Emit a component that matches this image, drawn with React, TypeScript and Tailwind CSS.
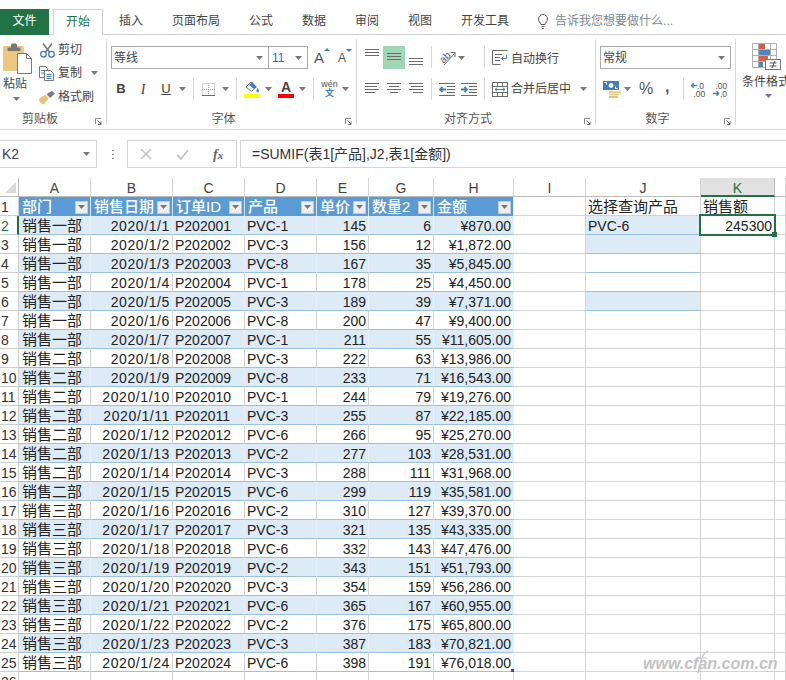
import type { ReactNode } from 'react'

const FONT = "font-['Liberation_Sans','Noto_Sans_CJK_SC',sans-serif]"

const COLS = ['A', 'B', 'C', 'D', 'E', 'G', 'H', 'I', 'J', 'K', '']
const HEADERS = ['部门', '销售日期', '订单ID', '产品', '单价', '数量2', '金额']

// dept, date, product, price, qty, amount
const ROWS: [string, string, string, number, number, string][] = [
  ['一', '2020/1/1', 'PVC-1', 145, 6, '¥870.00'],
  ['一', '2020/1/2', 'PVC-3', 156, 12, '¥1,872.00'],
  ['一', '2020/1/3', 'PVC-8', 167, 35, '¥5,845.00'],
  ['一', '2020/1/4', 'PVC-1', 178, 25, '¥4,450.00'],
  ['一', '2020/1/5', 'PVC-3', 189, 39, '¥7,371.00'],
  ['一', '2020/1/6', 'PVC-8', 200, 47, '¥9,400.00'],
  ['一', '2020/1/7', 'PVC-1', 211, 55, '¥11,605.00'],
  ['二', '2020/1/8', 'PVC-3', 222, 63, '¥13,986.00'],
  ['二', '2020/1/9', 'PVC-8', 233, 71, '¥16,543.00'],
  ['二', '2020/1/10', 'PVC-1', 244, 79, '¥19,276.00'],
  ['二', '2020/1/11', 'PVC-3', 255, 87, '¥22,185.00'],
  ['二', '2020/1/12', 'PVC-6', 266, 95, '¥25,270.00'],
  ['二', '2020/1/13', 'PVC-2', 277, 103, '¥28,531.00'],
  ['二', '2020/1/14', 'PVC-3', 288, 111, '¥31,968.00'],
  ['二', '2020/1/15', 'PVC-6', 299, 119, '¥35,581.00'],
  ['三', '2020/1/16', 'PVC-2', 310, 127, '¥39,370.00'],
  ['三', '2020/1/17', 'PVC-3', 321, 135, '¥43,335.00'],
  ['三', '2020/1/18', 'PVC-6', 332, 143, '¥47,476.00'],
  ['三', '2020/1/19', 'PVC-2', 343, 151, '¥51,793.00'],
  ['三', '2020/1/20', 'PVC-3', 354, 159, '¥56,286.00'],
  ['三', '2020/1/21', 'PVC-6', 365, 167, '¥60,955.00'],
  ['三', '2020/1/22', 'PVC-2', 376, 175, '¥65,800.00'],
  ['三', '2020/1/23', 'PVC-3', 387, 183, '¥70,821.00'],
  ['三', '2020/1/24', 'PVC-6', 398, 191, '¥76,018.00'],
]

function Caret({ className = '' }: { className?: string }) {
  return (
    <svg width="7" height="4" viewBox="0 0 7 4" className={`shrink-0 ${className}`}>
      <path d="M0 0h7L3.5 4z" fill="#777" />
    </svg>
  )
}

function Sep({ className = '' }: { className?: string }) {
  return <div className={`w-px h-[22px] bg-[#d8d8d8] shrink-0 ${className}`} />
}

function Lines({ kind }: { kind: 'left' | 'center' | 'right' | 'top' | 'middle' | 'bottom' }) {
  const d = {
    left: 'M0 2.5h14M0 5.500h12M0 8.500h14M0 11.500h10',
    center: 'M0 2.500h14M2 5.500h10M0 8.500h14M3 11.500h8',
    right: 'M0 2.500h14M2 5.500h12M0 8.500h14M4 11.500h10',
    top: 'M0 0.500h14M0 3.500h14M0 6.500h14',
    middle: 'M0 4.500h14M0 7.500h14M0 10.500h14',
    bottom: 'M0 9.500h14M0 12.500h14M0 15.500h14',
  }[kind]
  return (
    <svg width="14" height="16" viewBox="0 0 14 16" className="shrink-0">
      <path d={d} stroke="#6b6b6b" fill="none" />
    </svg>
  )
}

function PasteIcon() {
  return (
    <svg width="29" height="31" viewBox="0 0 29 31">
      <rect x="0" y="3" width="21" height="25" rx="1.500" fill="#edc77f" />
      <path d="M4.500 8V4.500h3.500V2a1.500 1.500 0 0 1 1.500-1.500h3A1.500 1.500 0 0 1 14 2v2.500h3.500V8z" fill="#777" />
      <path d="M14.500 10.500h9l5 5v15h-14z" fill="#fff" stroke="#7a7a7a" />
      <path d="M23.500 10.500v5h5" fill="none" stroke="#7a7a7a" />
    </svg>
  )
}

function ScissorsIcon() {
  return (
    <svg width="15" height="15" viewBox="0 0 15 15">
      <path d="M3 0.500l6.800 9M12 0.500l-6.800 9" stroke="#777" strokeWidth="1.500" fill="none" />
      <circle cx="3.500" cy="11.200" r="2.800" fill="none" stroke="#3f7fc1" strokeWidth="1.300" />
      <circle cx="11.500" cy="11.200" r="2.800" fill="none" stroke="#3f7fc1" strokeWidth="1.300" />
    </svg>
  )
}

function CopyIcon() {
  return (
    <svg width="15" height="15" viewBox="0 0 15 15">
      <path d="M0.500 0.500h6l2 2v9h-8z" fill="#fff" stroke="#777" />
      <path d="M2 4.500h4M2 7h3" stroke="#3f7fc1" />
      <path d="M5.500 4.500h6l3 3v7h-9z" fill="#fff" stroke="#777" />
      <path d="M7.500 8.500h5M7.500 10.500h5M7.500 12.500h5" stroke="#3f7fc1" />
    </svg>
  )
}

function BrushIcon() {
  return (
    <svg width="16" height="13" viewBox="0 0 16 13">
      <path d="M0 8l6-4.500 3.500 4L5 13H2l1-2-2 1z" fill="#e8c27d" />
      <path d="M7.500 3l5.500-3 3 2.500-5 4.500z" fill="#7a7a7a" />
    </svg>
  )
}

function BordersIcon() {
  return (
    <svg width="13" height="13" viewBox="0 0 13 13">
      <path d="M0.500 0.500h12v12h-12zM6.500 0v13M0 6.500h13" fill="none" stroke="#a8a8a8" strokeDasharray="1 1" />
      <path d="M0 12.500h13" stroke="#666" />
    </svg>
  )
}

function FillIcon() {
  return (
    <svg width="16" height="18" viewBox="0 0 16 18">
      <path d="M2 7l5-5 5 5-4.500 4.500z" fill="#fff" stroke="#777" />
      <path d="M5 5l3-3 5 5-3 2z" fill="#3f7fc1" />
      <path d="M13.500 8c1 1.500 1.500 2.300 1.500 3a1.300 1.300 0 0 1-2.600 0c0-.7.5-1.500 1.100-3z" fill="#3f7fc1" />
      <rect x="0" y="14" width="16" height="4" fill="#ffff00" />
    </svg>
  )
}

function WrapIcon() {
  return (
    <svg width="16" height="15" viewBox="0 0 16 15">
      <path d="M0.500 0.500h15M0.500 14.500h8M0.500 0.500v14" stroke="#6b6b6b" fill="none" />
      <path d="M3 4.500h7M3 7.500h5M3 10.500h5" stroke="#6b6b6b" />
      <path d="M14.500 5v3.500h-5M11.500 6.500l-2 2 2 2" stroke="#3f7fc1" fill="none" />
    </svg>
  )
}

function MergeIcon() {
  return (
    <svg width="16" height="15" viewBox="0 0 16 15">
      <rect x="0.500" y="0.500" width="15" height="14" fill="none" stroke="#6b6b6b" />
      <path d="M0 4.500h16M0 10.500h16M5.500 0v4M10.500 0v4M5.500 11v4M10.500 11v4" stroke="#6b6b6b" />
      <path d="M3 7.500h10M5 5.800L3 7.500l2 1.700M11 5.800l2 1.700-2 1.700" stroke="#3f7fc1" fill="none" />
    </svg>
  )
}

function IndentIcon({ dir }: { dir: 'in' | 'out' }) {
  return (
    <svg width="16" height="13" viewBox="0 0 16 13">
      <path d="M0 0.500h16M8 3.500h8M8 6.500h8M8 9.500h8M0 12.500h16" stroke="#6b6b6b" />
      {dir === 'out' ? (
        <path d="M1 6.500h6M3.500 3.800L1 6.500l2.500 2.700" stroke="#3f7fc1" strokeWidth="1.800" fill="none" />
      ) : (
        <path d="M0 6.500h6M3.500 3.800L6 6.500 3.500 9.200" stroke="#3f7fc1" strokeWidth="1.800" fill="none" />
      )}
    </svg>
  )
}

function OrientIcon() {
  return (
    <svg width="17" height="17" viewBox="0 0 17 17">
      <text x="1" y="12" fontSize="10" fill="#555" transform="rotate(-45 6 9)" fontFamily="Liberation Sans">ab</text>
      <path d="M5 16L15.500 4.500M11.500 3.500h4.500V8" stroke="#666" fill="none" />
    </svg>
  )
}

function AccountingIcon() {
  return (
    <svg width="18" height="17" viewBox="0 0 18 17">
      <rect x="0" y="0" width="16" height="9" fill="#3f7fc1" />
      <circle cx="8" cy="4.500" r="2.400" fill="#fff" />
      <path d="M1.500 1.500h2v2M14.500 7.500h-2v-2" stroke="#fff" fill="none" />
      <path d="M6 10.500h12V12H6zM6 12.800h10v1.500H6zM6 15h9v2H6z" fill="#e8c27d" />
    </svg>
  )
}

function DecimalIcon({ more }: { more?: boolean }) {
  return (
    <svg width="15" height="15" viewBox="0 0 15 15" className="shrink-0">
      <text x={more ? 2.500 : 6} y="6.500" fontSize="8.500" fill="#555" fontFamily="Liberation Sans">{more ? '.00' : '.0'}</text>
      <text x={more ? 7 : 2.500} y="14.500" fontSize="8.500" fill="#555" fontFamily="Liberation Sans">{more ? '.0' : '.00'}</text>
      {more ? (
        <path d="M0 11.500h5.500M3.500 9.300l2.200 2.200-2.200 2.200" stroke="#3f7fc1" strokeWidth="1.300" fill="none" />
      ) : (
        <path d="M0.500 3.500h5.500M2.700 1.300L.5 3.500l2.200 2.200" stroke="#3f7fc1" strokeWidth="1.300" fill="none" />
      )}
    </svg>
  )
}

function CondFormatIcon() {
  return (
    <svg width="29" height="27" viewBox="0 0 29 27">
      <path d="M0.500 0.500h24v24h-24zM6.500 0v25M18.500 0v25M0 6.500h25M0 12.500h25M0 18.500h25" fill="none" stroke="#b0b0b0" />
      <rect x="7" y="1" width="6" height="5" fill="#d9603b" />
      <rect x="7" y="7" width="11" height="5" fill="#4a86c5" />
      <rect x="7" y="13" width="9" height="5" fill="#d9603b" />
      <rect x="7" y="19" width="4" height="5" fill="#4a86c5" />
      <rect x="13.500" y="16.500" width="15" height="10" fill="#fff" stroke="#777" />
      <path d="M17.500 20h7M17.500 23h7M23 18l-3 7" stroke="#555" fill="none" />
    </svg>
  )
}

function Launcher() {
  return (
    <svg width="7" height="7" viewBox="0 0 7 7" className="absolute right-[4px] bottom-[0px]">
      <path d="M0.500 6V0.500H6" stroke="#8a8a8a" fill="none" />
      <path d="M2.500 2.500L6 6M6 3.500V6.500H3" stroke="#666" fill="none" />
    </svg>
  )
}

function Group({ width, label, labelPad = 'pr-[16px]', children }: { width: string; label: string; labelPad?: string; children: ReactNode }) {
  return (
    <div className={`relative flex flex-col shrink-0 h-[86px] border-r border-[#d8d8d8] pt-[7px] ${width}`}>
      <div className="flex-1 min-h-0">{children}</div>
      <div className={`h-[14px] leading-[16px] text-center text-[12px] text-[#555] ${labelPad}`}>{label}</div>
      <Launcher />
    </div>
  )
}

function Combo({ width, label, color = 'text-[#444]', pad = 'pl-[2px]', caret = 'pr-[5px]' }: { width: string; label: string; color?: string; pad?: string; caret?: string }) {
  return (
    <div className={`flex items-center justify-between h-[23px] border border-[#ababab] text-[12px] ${width} ${pad} ${caret} ${color}`}>
      <span>{label}</span>
      <Caret />
    </div>
  )
}

function Ribbon() {
  return (
    <div className="h-[95px] border-b border-[#d4d4d4] pt-[4px] flex text-[12px] text-[#444] overflow-hidden">
      <Group width="w-[107px]" label="剪贴板" labelPad="pr-[26px]">
        <div className="flex h-[65px]">
          <div className="ml-[3px] w-[29px] -mt-[3px] flex flex-col items-center">
            <PasteIcon />
            <div className="self-start mt-[3px] leading-[14px]">粘贴</div>
            <Caret className="mt-[6px] -ml-[2px]" />
          </div>
          <div className="ml-[7px] flex flex-col -mt-[3px]">
            <div className="flex items-center h-[14px] gap-[3px] ml-[1px]"><ScissorsIcon />剪切</div>
            <div className="flex items-center h-[14px] gap-[4px] mt-[9px]"><CopyIcon />复制<Caret className="ml-[5px]" /></div>
            <div className="flex items-center h-[14px] gap-[3px] mt-[10px]"><BrushIcon />格式刷</div>
          </div>
        </div>
      </Group>

      <Group width="w-[250px]" label="字体">
        <div className="flex items-center ml-[4px]">
          <Combo width="w-[158px]" label="等线" />
          <Combo width="w-[40px] -ml-px" label="11" color="text-[#2b6cb0]" pad="pl-[3px]" />
          <div className="relative ml-[6px] w-[14px] text-[15px] text-[#555] leading-none">A<span className="absolute -right-[2px] -top-[2px] w-0 h-0 border-x-[3px] border-x-transparent border-b-[3px] border-b-[#3f7fc1]" /></div>
          <div className="relative ml-[10px] w-[12px] text-[12px] text-[#555] leading-none">A<span className="absolute -right-[2px] -top-[3px] w-0 h-0 border-x-[3px] border-x-transparent border-t-[3px] border-t-[#3f7fc1]" /></div>
        </div>
        <div className="flex items-center h-[24px] mt-[8px]">
          <b className="ml-[7px] w-[14px] text-center text-[13px] font-bold text-[#444]">B</b>
          <i className="ml-[8px] w-[14px] text-center text-[14px] font-['Liberation_Serif',serif] text-[#444]">I</i>
          <u className="ml-[9px] w-[14px] text-center text-[13px] text-[#444]">U</u>
          <Caret className="ml-[6px]" />
          <Sep className="ml-[7px]" />
          <div className="ml-[8px]"><BordersIcon /></div>
          <Caret className="ml-[7px]" />
          <Sep className="ml-[7px]" />
          <div className="ml-[7px]"><FillIcon /></div>
          <Caret className="ml-[5px]" />
          <div className="ml-[6px] w-[16px] flex flex-col items-center leading-none">
            <span className="text-[14px] text-[#444] h-[14px] font-bold">A</span>
            <span className="w-[16px] h-[4px] bg-[#ff0000]" />
          </div>
          <Caret className="ml-[5px]" />
          <Sep className="ml-[7px]" />
          <div className="ml-[8px] w-[15px] flex flex-col items-center leading-none">
            <span className="text-[9px] text-[#555]">wén</span>
            <span className="text-[9px] text-[#3f7fc1] font-bold">文</span>
          </div>
          <Caret className="ml-[5px]" />
        </div>
      </Group>

      <Group width="w-[239px]" label="对齐方式">
        <div className="flex items-start h-[23px]">
          <div className="ml-[8px] mt-[3px]"><Lines kind="top" /></div>
          <div className="ml-[4px] w-[22px] h-[23px] bg-[#a0d6b4] flex items-start justify-center pt-[3px]"><Lines kind="middle" /></div>
          <div className="ml-[4px] mt-[3px]"><Lines kind="bottom" /></div>
          <Sep className="ml-[8px]" />
          <div className="ml-[7px] mt-[3px]"><OrientIcon /></div>
          <Caret className="ml-[2px] mt-[10px]" />
          <Sep className="ml-[19px]" />
          <div className="ml-[7px] mt-[4px]"><WrapIcon /></div>
          <span className="ml-[3px] mt-[4px]">自动换行</span>
        </div>
        <div className="flex items-center h-[24px] mt-[8px]">
          <div className="ml-[8px]"><Lines kind="left" /></div>
          <div className="ml-[8px]"><Lines kind="center" /></div>
          <div className="ml-[8px]"><Lines kind="right" /></div>
          <Sep className="ml-[8px]" />
          <div className="ml-[7px]"><IndentIcon dir="out" /></div>
          <div className="ml-[6px]"><IndentIcon dir="in" /></div>
          <Sep className="ml-[7px]" />
          <div className="ml-[7px]"><MergeIcon /></div>
          <span className="ml-[3px]">合并后居中</span>
          <Caret className="ml-[9px]" />
        </div>
      </Group>

      <Group width="w-[140px]" label="数字">
        <div className="ml-[4px]"><Combo width="w-[131px]" label="常规" /></div>
        <div className="flex items-center h-[24px] mt-[8px]">
          <div className="ml-[7px]"><AccountingIcon /></div>
          <Caret className="ml-[3px]" />
          <span className="ml-[8px] w-[14px] text-[16px] leading-none text-[#555]">%</span>
          <span className="ml-[12px] w-[5px] text-[16px] leading-none text-[#555] font-bold -mt-[5px]">,</span>
          <Sep className="ml-[13px]" />
          <div className="ml-[7px]"><DecimalIcon /></div>
          <div className="ml-[7px]"><DecimalIcon more /></div>
        </div>
      </Group>

      <div className="flex-1 pt-[4px] flex flex-col whitespace-nowrap">
        <div className="ml-[16px]"><CondFormatIcon /></div>
        <div className="ml-[6px] mt-[5px] leading-[14px]">条件格式</div>
        <Caret className="ml-[29px] mt-[5px]" />
      </div>
    </div>
  )
}

function FormulaBar() {
  return (
    <div className="mt-[10px] flex items-stretch h-[28px] text-[#444]">
      <div className="w-[97px] border border-l-0 border-[#d4d4d4] flex items-center justify-between pl-[2px] pr-[6px] text-[14px]">
        K2
        <Caret />
      </div>
      <div className="w-[30px] flex items-center justify-center">
        <svg width="3" height="11" viewBox="0 0 3 11"><path d="M1 1h2v1H1zM1 5h2v1H1zM1 9h2v1H1z" fill="#888" /></svg>
      </div>
      <div className="w-[110px] border border-[#d4d4d4] flex items-center">
        <svg width="12" height="12" viewBox="0 0 12 12" className="ml-[12px]"><path d="M1 1l10 10M11 1L1 11" stroke="#c4c4c4" strokeWidth="1.600" /></svg>
        <svg width="13" height="11" viewBox="0 0 13 11" className="ml-[24px]"><path d="M1 6l4 4 7-9" stroke="#c4c4c4" strokeWidth="1.800" fill="none" /></svg>
        <i className="ml-[24px] text-[14px] font-bold font-['Liberation_Serif',serif] text-[#666]">f<span className="text-[11px]">x</span></i>
      </div>
      <div className="ml-[3px] flex-1 border-y border-[#d4d4d4] border-l bg-white flex items-center pl-[11px] text-[14px] text-[#333]">
        =SUMIF(表1[产品],J2,表1[金额])
      </div>
    </div>
  )
}

function FilterBtn() {
  return (
    <span className="ml-auto mr-[2px] mt-[1px] w-[13px] h-[13px] shrink-0 bg-[#eeeeee] border border-[#c8c8c8] flex items-center justify-center">
      <Caret />
    </span>
  )
}

function RowNum({ n }: { n: number }) {
  return (
    <div className={`border-r border-b border-[#cfcfcf] bg-white pl-[1px] leading-[20px] text-[14px] ${n === 2 ? 'text-[#217346] border-r-2 border-r-[#217346]' : 'text-[#333]'}`}>
      {n}
    </div>
  )
}

function Cell({ children, right, band, table, gray = true, className = '' }: { children?: ReactNode; right?: boolean; band?: boolean; table?: boolean; gray?: boolean; className?: string }) {
  return (
    <div
      className={`relative border-b flex items-center overflow-hidden whitespace-nowrap px-[2px] pt-[1px] leading-[18px] text-[14px] text-[#222] ${right ? 'justify-end' : ''} ${band ? 'bg-[#ddebf7]' : 'bg-white'} ${table ? 'border-b-[#9bc2e6]' : 'border-b-[#d4d4d4]'} ${gray ? 'border-r border-r-[#d4d4d4]' : 'border-r border-r-[#e8f1f9]'} ${className}`}
    >
      {children}
    </div>
  )
}

function Sheet() {
  return (
    <div className="mt-[10px] grid grid-cols-[19px_72px_82px_72px_72px_52px_65px_80px_72px_115px_74px_1fr] auto-rows-[19px]">
      <div className="border-r border-b border-[#bdbdbd] flex items-end justify-end pr-[2px] pb-[3px]">
        <span className="w-0 h-0 border-l-[11px] border-l-transparent border-b-[11px] border-b-[#d9d9d9]" />
      </div>
      {COLS.map(c => (
        <div
          key={c}
          className={`text-center text-[14px] leading-[20px] ${c === 'K' ? 'bg-[#e1e1e1] text-[#217346] border-b-2 border-b-[#217346] border-r border-r-[#bdbdbd]' : 'text-[#444] border-b border-r border-[#d4d4d4] border-b-[#bdbdbd]'}`}
        >
          {c}
        </div>
      ))}

      <RowNum n={1} />
      {HEADERS.map(h => (
        <div key={h} className="bg-[#5b9bd5] border-r border-r-[#dbe8f4] flex items-center pl-[3px] text-[15px] font-medium text-white whitespace-nowrap overflow-hidden">
          <span className="mt-[1px]">{h}</span>
          <FilterBtn />
        </div>
      ))}
      <Cell />
      <Cell className="text-[15px] pt-[2px]">选择查询产品</Cell>
      <Cell className="text-[15px] pt-[2px]">销售额</Cell>
      <Cell />

      {ROWS.map((r, i) => {
        const band = i % 2 === 0
        const rowNo = i + 2
        const idText = 'P' + (202001 + i)
        // the J column has its own small table, rows 2-6
        const jBand = rowNo === 2 || rowNo === 3 || rowNo === 6
        const jTable = rowNo <= 6
        return (
          <div key={rowNo} className="contents">
            <RowNum n={rowNo} />
            <Cell band={band} table gray={!band} className="text-[15px] pl-[3px]">销售{r[0]}部</Cell>
            <Cell band={band} table gray={!band} right className="tracking-[0.6px]">{r[1]}</Cell>
            <Cell band={band} table gray={!band}>{idText}</Cell>
            <Cell band={band} table gray={!band}>{r[2]}</Cell>
            <Cell band={band} table gray={!band} right>{r[3]}</Cell>
            <Cell band={band} table gray={!band} right>{r[4]}</Cell>
            <Cell band={band} table gray={false} right className="border-r-[#9bc2e6] overflow-visible">
              {r[5]}
              {rowNo === 25 && <span className="absolute right-[-1px] bottom-[-1px] w-[3px] h-[3px] bg-[#3b4ba0]" />}
            </Cell>
            <Cell />
            <Cell band={jBand} table={jTable}>{rowNo === 2 ? 'PVC-6' : ''}</Cell>
            <Cell right className={rowNo === 2 ? 'overflow-visible z-10' : ''}>
              {rowNo === 2 && (
                <>
                  245300
                  <span className="absolute -left-[2px] -top-[2px] -right-[2px] -bottom-[2px] border-2 border-[#217346]" />
                  <span className="absolute -right-[3px] -bottom-[3px] w-[5px] h-[5px] bg-[#217346]" />
                </>
              )}
            </Cell>
            <Cell />
          </div>
        )
      })}

      <RowNum n={26} />
      {COLS.map((c, i) => <Cell key={c + i} />)}
    </div>
  )
}

export default function App() {
  return (
    <div className={`relative w-[786px] h-[680px] overflow-hidden bg-white ${FONT}`}>
      <div className="pt-[9px]">
        <div className="flex h-[26px] border-b border-[#d2d2d2] text-[12px] text-[#444] leading-[25px] whitespace-nowrap">
          <div className="w-[49px] h-[26px] bg-[#217346] text-white text-center">文件</div>
          <div className="ml-[4px] w-[50px] h-[26px] bg-white border border-b-0 border-[#d2d2d2] text-[#217346] text-center">开始</div>
          <div className="ml-[16px] flex gap-[29px]">
            <span>插入</span>
            <span>页面布局</span>
            <span>公式</span>
            <span>数据</span>
            <span>审阅</span>
            <span>视图</span>
            <span>开发工具</span>
          </div>
          <div className="ml-[29px] flex items-center gap-[7px]">
            <svg width="10" height="15" viewBox="0 0 10 15">
              <path d="M3 10.500C2.500 8.500.5 7.500.5 5a4.500 4.500 0 0 1 9 0c0 2.500-2 3.500-2.500 5.500z" fill="none" stroke="#555" />
              <path d="M3.500 12.500h3M4 14.500h2" stroke="#555" />
            </svg>
            <span className="text-[#7b8794]">告诉我您想要做什么...</span>
          </div>
        </div>
      </div>
      <Ribbon />
      <FormulaBar />
      <Sheet />
      <div className="absolute left-[643px] top-[652px] text-[16px] leading-[24px] italic font-bold text-[#c2c2c2] [text-shadow:1px_1px_1px_#ffffff,-1px_-1px_1px_#ffffff]">www.cfan.com.cn</div>
      <svg width="12" height="25" viewBox="0 0 12 25" className="absolute left-[697px] top-[649px]">
        <path d="M1 24C3 16 4 8 7 5c1-1 3-2 4-3" stroke="#c8c8c8" strokeWidth="1.500" fill="none" />
        <path d="M2 9h8" stroke="#c8c8c8" />
      </svg>
    </div>
  )
}
